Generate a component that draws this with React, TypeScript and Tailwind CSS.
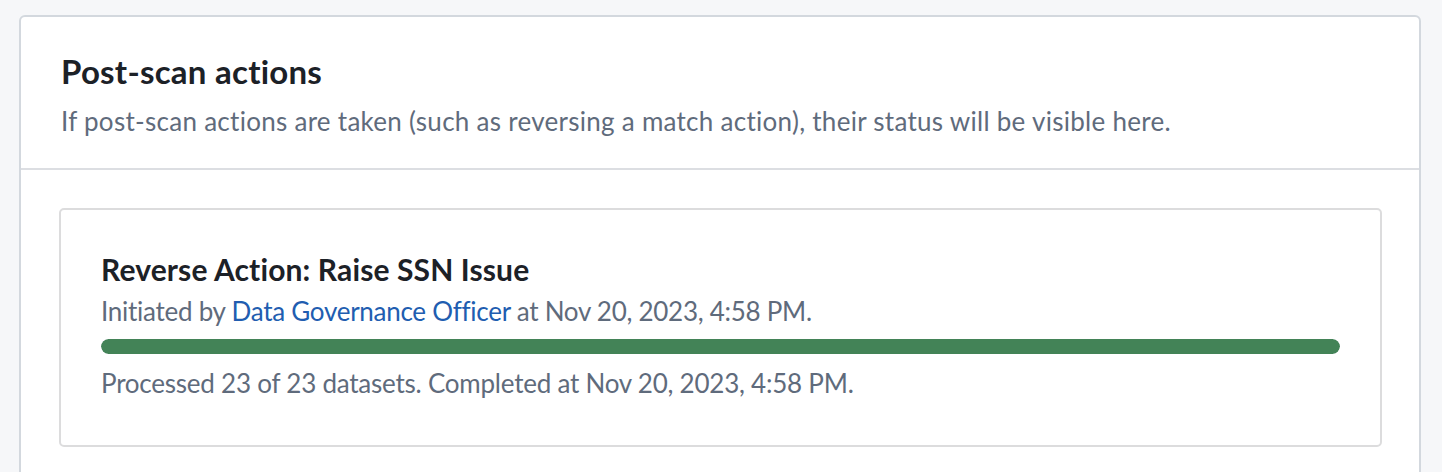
import React from "react";

export default function App() {
  return (
    <div
      className="w-[1442px] h-[472px] overflow-hidden bg-[#f6f7f9] pt-[15px] pl-[19px] pr-[21px]"
      style={{ fontFamily: '"Lato", "Noto Sans", sans-serif' }}
    >
      <div className="h-[480px] bg-white border-2 border-[#d3d8de] rounded-[6px]">
        <div className="pt-[36px] pb-[31px] pl-[40px] pr-[20px]">
          <h2 className="text-[33px] leading-[36px] tracking-[0.25px] font-bold text-[#1c2127] whitespace-nowrap">
            Post-scan actions
          </h2>
          <p className="mt-[16px] text-[26px] leading-[32px] tracking-[0.28px] text-[#5f6b7c] whitespace-nowrap">
            If post-scan actions are taken (such as reversing a match action), their status will be visible here.
          </p>
        </div>
        <div className="border-t-2 border-[#dcdee2] pt-[38px] pl-[38px] pr-[37px]">
          <div className="border-2 border-[#dcdcdd] rounded-[5px] pt-[42px] pb-[46px] px-[40px]">
            <h3 className="text-[30px] leading-[34px] tracking-[0.13px] font-bold text-[#1c2127] whitespace-nowrap">
              Reverse Action: Raise SSN Issue
            </h3>
            <p className="mt-[9px] text-[26px] leading-[32px] tracking-[-0.27px] text-[#5f6b7c] whitespace-nowrap">
              Initiated by <span className="text-[#215db0]">Data Governance Officer</span> at Nov 20, 2023, 4:58 PM.
            </p>
            <div className="mt-[12px] h-[15px] rounded-full bg-[#e5e8eb] overflow-hidden">
              <div className="h-full rounded-full bg-[#438357]" style={{ width: "100%" }} />
            </div>
            <p className="mt-[13px] text-[26px] leading-[32px] tracking-[-0.23px] text-[#5f6b7c] whitespace-nowrap">
              Processed 23 of 23 datasets. Completed at Nov 20, 2023, 4:58 PM.
            </p>
          </div>
        </div>
      </div>
    </div>
  );
}
